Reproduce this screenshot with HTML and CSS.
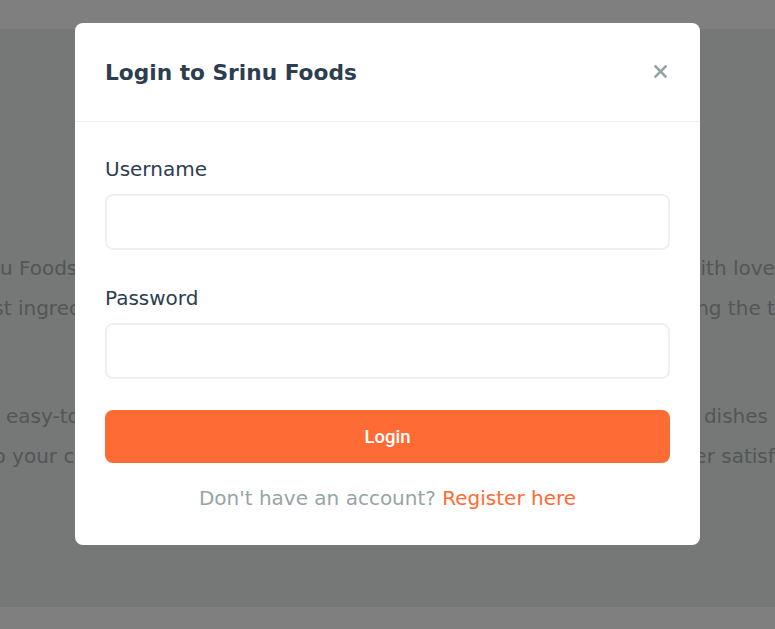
FILE: index.html
```html
<!DOCTYPE html>
<html lang="en">
<head>
<meta charset="utf-8">
<title>Srinu Foods</title>
<link rel="stylesheet" href="styles.css">
</head>
<body>
  <header class="topbar"></header>
  <section class="about">
    <div class="para">
      <div class="line"><span>Welcome to Srinu Foods, where every dish is freshly made, cooked and served daily with love and care for all.</span></div>
      <div class="line"><span>by using only the finest ingredients sourced from good local farms and growers daily, bringing the taste of home to us all.</span></div>
    </div>
    <div class="para">
      <div class="line"><span>Our easy-to-use ordering system lets you explore the wide range of tasty dishes and</span></div>
      <div class="line"><span>right to your choice of address, hot and fresh, with guaranteed total customer satisfaction.</span></div>
    </div>
  </section>
  <footer class="bottombar"></footer>

  <div class="overlay">
    <div class="modal">
      <div class="modal-header">
        <h2 class="modal-title">Login to Srinu Foods</h2>
        <button class="close-btn" aria-label="Close">
          <svg width="13" height="13" viewBox="0 0 13 13"><path d="M1.5 1.5 L11.5 11.5 M11.5 1.5 L1.5 11.5" stroke="#95a5a6" stroke-width="2.6" stroke-linecap="square"/></svg>
        </button>
      </div>
      <div class="modal-body">
        <div class="field">
          <label class="field-label" for="username">Username</label>
          <input class="field-input" id="username" type="text">
        </div>
        <div class="field">
          <label class="field-label" for="password">Password</label>
          <input class="field-input" id="password" type="password">
        </div>
        <button class="login-btn">Login</button>
        <p class="register">Don't have an account? <a href="#" class="register-link">Register here</a></p>
      </div>
    </div>
  </div>
</body>
</html>
```
FILE: styles.css
```css
* { box-sizing: border-box; }

html, body {
  margin: 0;
  padding: 0;
  height: 100%;
  overflow: hidden;
}

body {
  font-family: "DejaVu Sans", sans-serif;
  background: #ffffff;
  color: #2c3e50;
}

.topbar {
  height: 29px;
  background: #ffffff;
}

.about {
  height: 578px;
  background: #ecf0f1;
  padding-top: 220px;
  overflow: hidden;
}

.para {
  margin-bottom: 69px;
}

.line {
  display: flex;
  justify-content: center;
  white-space: nowrap;
  font-size: 20px;
  line-height: 39.5px;
  color: #a7acad;
}

.bottombar {
  height: 30px;
  background: #ffffff;
}

.overlay {
  position: fixed;
  inset: 0;
  background: rgba(0, 0, 0, 0.5);
  display: flex;
  justify-content: center;
  align-items: flex-start;
  padding-top: 23px;
}

.modal {
  width: 625px;
  background: #ffffff;
  border-radius: 8px;
}

.modal-header {
  height: 99px;
  padding: 0 30px;
  display: flex;
  align-items: center;
  justify-content: space-between;
  border-bottom: 1px solid #ecf0f1;
}

.modal-title {
  margin: 0;
  font-size: 21.7px;
  font-weight: bold;
  color: #2c3e50;
}

.close-btn {
  width: 19px;
  height: 19px;
  padding: 0;
  border: none;
  background: none;
  display: flex;
  align-items: center;
  justify-content: center;
  margin-top: -2px;
}

.modal-body {
  padding: 34px 30px 33px;
}

.field {
  margin-bottom: 35px;
}

.field + .field {
  margin-bottom: 31px;
}

.field-label {
  display: block;
  font-size: 20px;
  line-height: 27px;
  color: #2c3e50;
  margin-bottom: 11px;
}

.field-input {
  display: block;
  width: 100%;
  height: 56px;
  border: 2px solid #ecf0f1;
  border-radius: 8px;
  background: #ffffff;
  font-size: 18px;
  padding: 0 15px;
  outline: none;
}

.login-btn {
  display: block;
  width: 100%;
  height: 53px;
  border: none;
  border-radius: 8px;
  background: #ff6b35;
  color: #ffffff;
  font-family: Roboto, "Liberation Sans", sans-serif;
  font-size: 18.5px;
  font-weight: 500;
}

.register {
  margin: 22px 0 0;
  text-align: center;
  font-size: 20px;
  line-height: 27px;
  color: #95a5a6;
}

.register-link {
  color: #ff6b35;
  text-decoration: none;
}
```
